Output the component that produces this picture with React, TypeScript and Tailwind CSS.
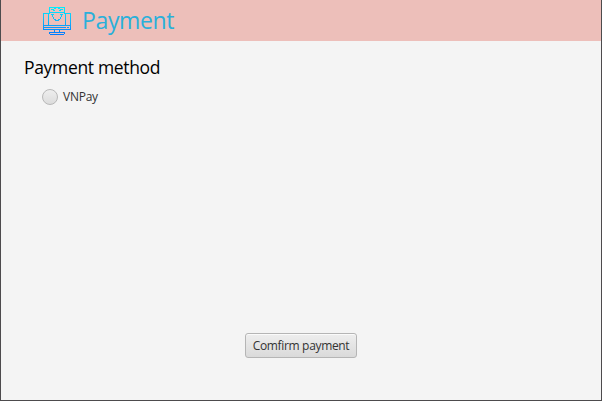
function ShopIcon() {
  return (
    <svg width="30" height="30" viewBox="0 0 30 30" fill="none" stroke="url(#shopGradient)" strokeWidth="1" shapeRendering="crispEdges" className="shrink-0">
      <defs>
        <linearGradient id="shopGradient" gradientUnits="userSpaceOnUse" x1="0" y1="1" x2="0" y2="29">
          <stop offset="0" stopColor="#00f0ff" />
          <stop offset="0.5" stopColor="#12b4f8" />
          <stop offset="1" stopColor="#0078ff" />
        </linearGradient>
      </defs>
      <path d="M6 7.5H1.5V23.5H28.5V7.5H24" />
      <path d="M2 19.5H28M2 21.5H24M25 21.5H27" />
      <path d="M6.5 19V7.5H8M23.5 19V7.5H22" />
      <path d="M7.5 7V1.5H22.5V7M8 6.5H22" />
      <path d="M9 3.5H12M18 3.5H21M11 4.5H13M17 4.5H19M12 2.5H14M16 2.5H18" />
      <path d="M9 8.5H12M18 8.5H21M10.5 9V11M19.5 9V11M11.5 11V13M18.5 11V13M12 13.5H14M16 13.5H18M13 14.5H17" />
      <path d="M12.5 24V27M17.5 24V27M7.5 28V26.5H22.5V28M8 28.5H22" />
    </svg>
  );
}

export default function App() {
  return (
    <main className="flex h-[401px] w-[602px] flex-col border-x border-b border-[#4d4b4d] bg-[#f4f4f4] font-['Open_Sans','Noto_Sans',sans-serif]">
      <header className="flex h-[41px] shrink-0 items-center bg-[#edbfba] pl-[41px]">
        <ShopIcon />
        <h1 className="ml-[10px] text-[23px] leading-[41px] tracking-[-0.35px] whitespace-nowrap text-[#29b0da]">Payment</h1>
      </header>
      <section className="flex flex-1 flex-col pt-[14px]">
        <h2 className="ml-[23px] text-[17.5px] leading-6 tracking-[-0.33px] whitespace-nowrap text-black">Payment method</h2>
        <label className="mt-[10px] ml-[41px] flex h-4 items-center gap-[5px] text-xs text-[#333333]">
          <span className="h-4 w-4 rounded-full border border-[#b8b8b8] bg-linear-to-b from-[#eeeeee] to-[#dcdcdc]" />
          <span className="tracking-[-0.25px]">VNPay</span>
        </label>
      </section>
      <footer className="flex h-[67px] justify-center">
        <button className="h-[25px] w-[112px] rounded-[3px] border border-[#b5b5b5] bg-linear-to-b from-[#eeeeee] to-[#dadada] text-xs leading-[23px] tracking-[-0.33px] whitespace-nowrap text-[#333333] shadow-[inset_0_1px_0_#fafafa]">
          Comfirm payment
        </button>
      </footer>
    </main>
  );
}
